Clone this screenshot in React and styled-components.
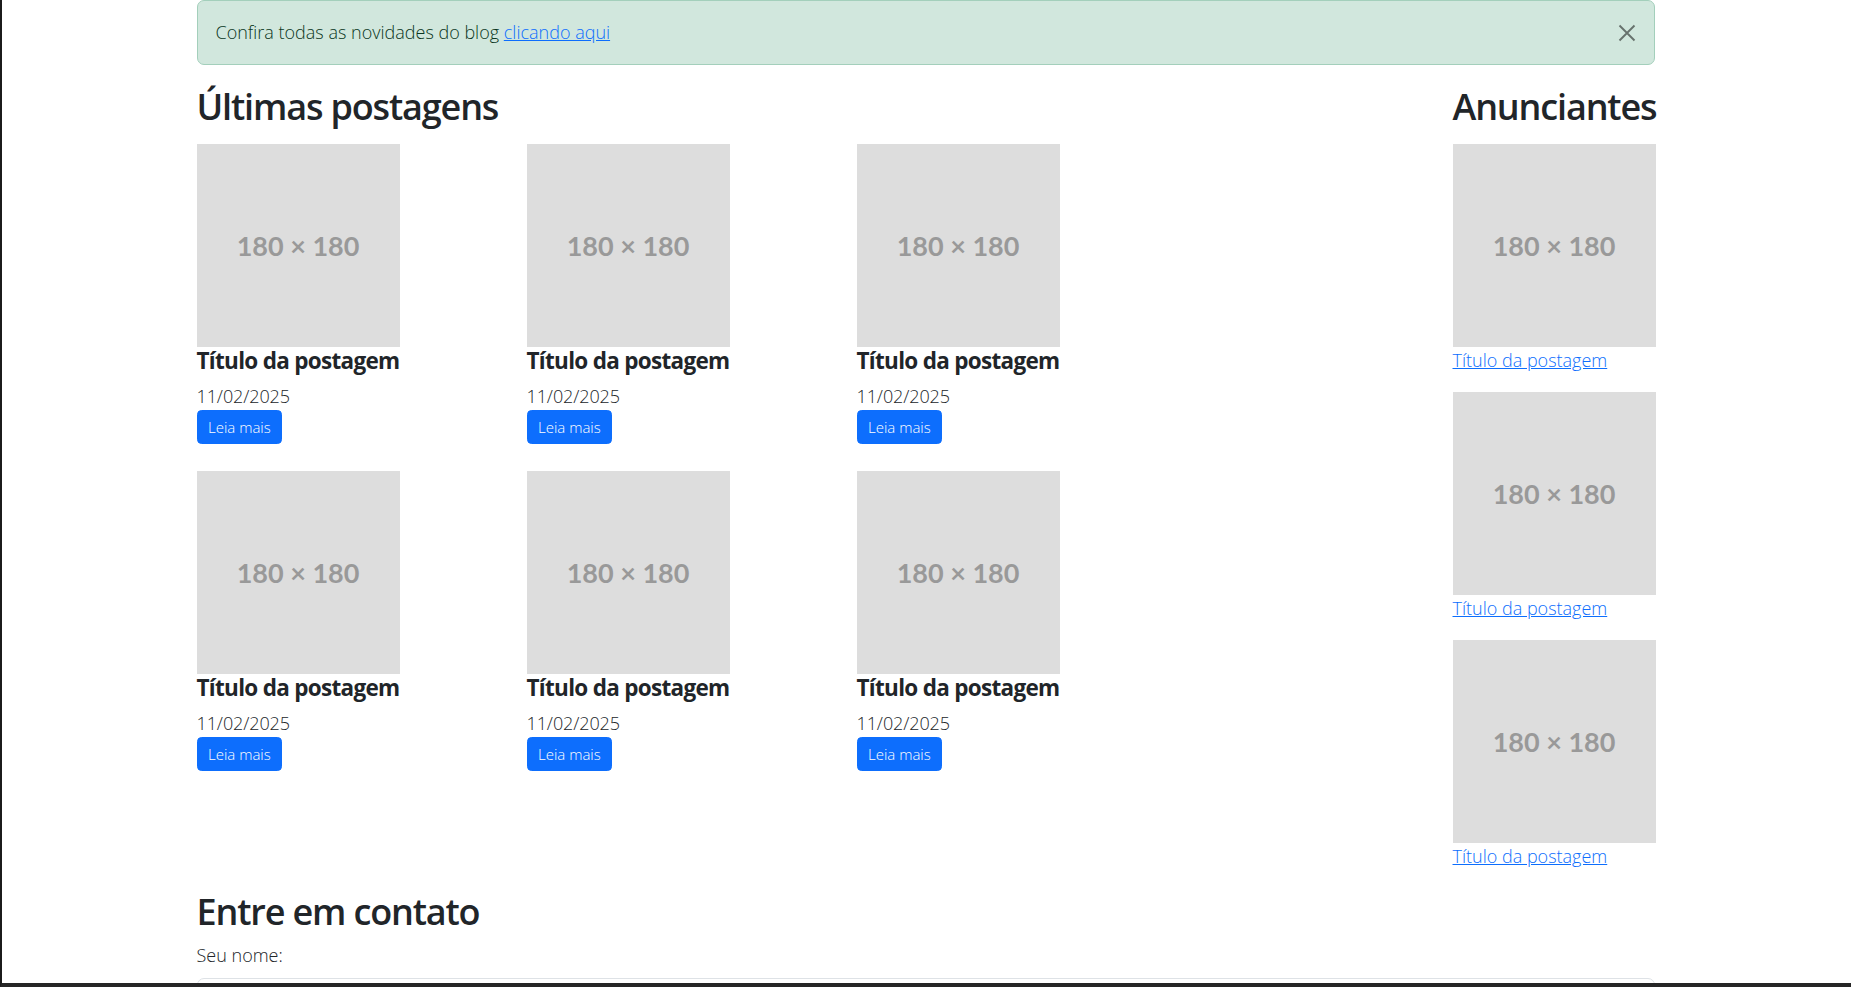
import React from "react";
import styled, { createGlobalStyle } from "styled-components";

const GlobalStyle = createGlobalStyle`
  html {
    scrollbar-width: none;
  }
  body {
    margin: 0;
    background: #fff;
    color: #212529;
    font-family: "Open Sans", "Noto Sans", Arial, sans-serif;
    font-size: 18px;
    line-height: 1.5;
  }
  * {
    box-sizing: border-box;
  }
`;

// the dark window edge that shows on the left and bottom of the screenshot
const Frame = styled.div`
  position: fixed;
  inset: 0;
  pointer-events: none;
  border-left: 2px solid #1b1b1b;
  border-bottom: 4px solid #262626;
  z-index: 10;
`;

const Container = styled.div`
  width: 1458px;
  margin: 0 auto;
`;

const Alert = styled.div`
  position: relative;
  background: #d1e7dd;
  border: 1px solid #a3cfbb;
  border-radius: 7px;
  color: #0a3622;
  padding: 18px 62px 18px 18px;
  margin-bottom: 18px;
  font-size: 18px;
  line-height: 27px;
  font-weight: 300;
`;

const AlertLink = styled.a`
  color: #0d6efd;
  text-decoration: underline;
`;

const CloseButton = styled.button`
  position: absolute;
  top: 0;
  right: 0;
  width: 54px;
  height: 63px;
  border: 0;
  background: transparent;
  display: flex;
  align-items: center;
  justify-content: center;
  padding: 0;
  cursor: pointer;
  opacity: 0.5;
`;

const Main = styled.div`
  display: flex;
  justify-content: space-between;
  align-items: flex-start;
`;

const PostsColumn = styled.section`
  width: 990px;
`;

const SectionTitle = styled.h2`
  margin: ${(p) => (p.$tight ? "2px 0 9px" : "2px 0 16px")};
  font-size: 36px;
  font-weight: 600;
  line-height: 43px;
  color: #212529;
  letter-spacing: -1.15px;
  white-space: nowrap;
`;

const PostGrid = styled.div`
  display: grid;
  grid-template-columns: repeat(3, 330px);
`;

const PostCard = styled.article`
  display: flex;
  flex-direction: column;
  align-items: flex-start;
  margin-bottom: 27px;
`;

const Placeholder = styled.div`
  width: 203px;
  height: 203px;
  background: #dddddd;
  color: #999999;
  display: flex;
  align-items: center;
  justify-content: center;
  font-family: Lato, "Open Sans", sans-serif;
  font-weight: 700;
  font-size: 27px;
  line-height: 1;
`;

const PostTitle = styled.h5`
  margin: 0 0 9px;
  font-size: 22.5px;
  font-weight: 700;
  line-height: 27px;
  letter-spacing: -0.7px;
  white-space: nowrap;
`;

const PostDate = styled.p`
  margin: 0;
  font-size: 18px;
  line-height: 27px;
  font-weight: 300;
  letter-spacing: -0.1px;
`;

const ReadMore = styled.button`
  background: #0d6efd;
  color: #fff;
  border: 1px solid #0d6efd;
  border-radius: 4.5px;
  font-family: inherit;
  font-size: 15px;
  line-height: 23px;
  padding: 4.5px 10.5px;
  font-weight: 300;
  cursor: pointer;
`;

const Sidebar = styled.aside`
  width: 202px;
`;

const AdItem = styled.div`
  margin-bottom: 18px;
`;

const AdLink = styled.a`
  display: block;
  color: #0d6efd;
  text-decoration: underline;
  font-size: 18px;
  line-height: 27px;
  font-weight: 300;
  white-space: nowrap;
`;

const Field = styled.div`
  margin-bottom: 18px;
`;

const Label = styled.label`
  display: block;
  margin-bottom: 9px;
  font-size: 18px;
  line-height: 27px;
  font-weight: 300;
`;

const Input = styled.input`
  display: block;
  width: 100%;
  height: 43px;
  padding: 7px 13px;
  font-family: inherit;
  font-size: 18px;
  color: #212529;
  border: 1px solid #dee2e6;
  border-radius: 7px;
  background: #fff;
`;

const TextArea = styled(Input).attrs({ as: "textarea" })`
  height: 120px;
  resize: vertical;
`;

const Submit = styled(ReadMore)`
  font-size: 18px;
  padding: 7px 14px;
  border-radius: 7px;
  margin-bottom: 40px;
`;

const posts = [1, 2, 3, 4, 5, 6];
const ads = [1, 2, 3];

export default function App() {
  return (
    <>
      <GlobalStyle />
      <Frame />
      <Container>
        <Alert>
          Confira todas as novidades do blog <AlertLink href="#">clicando aqui</AlertLink>
          <CloseButton aria-label="Fechar">
            <svg width="20" height="20" viewBox="0 0 16 16">
              <path d="M2 2 L14 14 M14 2 L2 14" stroke="#000" strokeWidth="1.5" fill="none" />
            </svg>
          </CloseButton>
        </Alert>

        <Main>
          <PostsColumn>
            <SectionTitle>Últimas postagens</SectionTitle>
            <PostGrid>
              {posts.map((id) => (
                <PostCard key={id}>
                  <Placeholder>180 × 180</Placeholder>
                  <PostTitle>Título da postagem</PostTitle>
                  <PostDate>11/02/2025</PostDate>
                  <ReadMore>Leia mais</ReadMore>
                </PostCard>
              ))}
            </PostGrid>
          </PostsColumn>

          <Sidebar>
            <SectionTitle>Anunciantes</SectionTitle>
            {ads.map((id) => (
              <AdItem key={id}>
                <Placeholder>180 × 180</Placeholder>
                <AdLink href="#">Título da postagem</AdLink>
              </AdItem>
            ))}
          </Sidebar>
        </Main>

        <section>
          <SectionTitle $tight>Entre em contato</SectionTitle>
          <Field>
            <Label htmlFor="nome">Seu nome:</Label>
            <Input id="nome" type="text" />
          </Field>
          <Field>
            <Label htmlFor="email">Seu e-mail:</Label>
            <Input id="email" type="email" />
          </Field>
          <Field>
            <Label htmlFor="msg">Mensagem:</Label>
            <TextArea id="msg" />
          </Field>
          <Submit>Enviar</Submit>
        </section>
      </Container>
    </>
  );
}
